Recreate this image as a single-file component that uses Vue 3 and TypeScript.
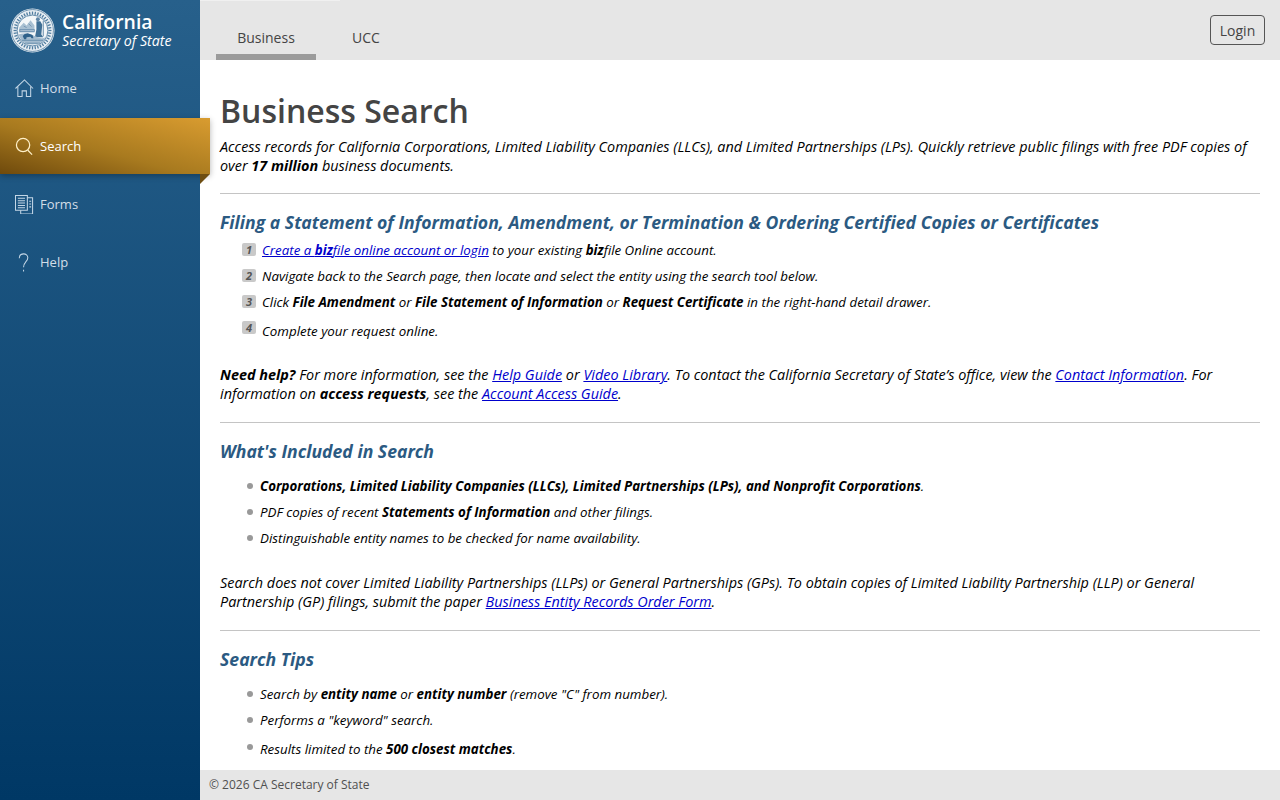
<script setup lang="ts">
const rays = Array.from({ length: 40 }, (_, i) => i * 9)
</script>

<template>
  <div class="app">
    <aside class="side">
      <div class="brand">
        <svg class="seal" viewBox="0 0 46 46" aria-hidden="true">
          <circle cx="23" cy="23" r="22.5" fill="#e8eef3" />
          <circle cx="23" cy="23" r="21.4" fill="none" stroke="#4f7c9f" stroke-width="0.8" />
          <g stroke="#4f7c9f" stroke-width="1.3">
            <line v-for="r in rays" :key="r" x1="23" y1="3.6" x2="23" y2="6.8" :transform="`rotate(${r} 23 23)`" />
          </g>
          <circle cx="23" cy="23" r="15.8" fill="#f4f7f9" stroke="#4f7c9f" stroke-width="0.9" />
          <path d="M9.5 20 L14 15 L17 18 L21 12.5 L25 18 V25 H9Z" fill="#a9c0d2" />
          <path d="M10 22 H25 V24 H10Z M14 18.5 L17 20 M19 16 L22 19" stroke="#5f86a7" stroke-width="0.7" fill="none" />
          <circle cx="28.5" cy="11.5" r="2" fill="#5f86a7" />
          <path d="M27 13.5 L31 13.5 L33 17 L32 27 L34 30 L25.5 30 L27 22Z" fill="#3f6f95" />
          <path d="M34 13 V29" stroke="#3f6f95" stroke-width="0.8" />
          <path d="M8.5 27 Q18 24.5 26 29 T37.5 28 L33.5 34.5 Q23 40 12.5 34.5Z" fill="#a5bccf" />
          <path d="M13 28.5 Q15 25.5 19 26 L23 27.5 L24 31 H22 L21 29.5 L17 30 L16.5 32 H14.5Z" fill="#2f618a" />
          <path d="M12 33 H34 M15 36 H31" stroke="#4f7c9f" stroke-width="0.7" />
        </svg>
        <div class="brand-text">
          <div class="brand-top">California</div>
          <div class="brand-sub">Secretary of State</div>
        </div>
      </div>
      <nav class="nav">
        <a class="item"><svg class="ico" viewBox="0 0 20 20" fill="none" stroke-width="1.1"><path d="M0.5 10 L10 1 L19 10" /><path d="M3 8 V18.5 H7.5 V12.5 H12 V18.5 H16.5 V8" /></svg><span>Home</span></a>
        <a class="item active"><svg class="ico" viewBox="0 0 20 20" fill="none" stroke-width="1.3"><circle cx="8.5" cy="8.5" r="7" /><path d="M13.5 14 L18 18.5" /></svg><span>Search</span></a>
        <a class="item"><svg class="ico" viewBox="0 0 20 20" fill="none" stroke-width="1.1"><path d="M0.5 0.5 H13 V16 H0.5Z" /><path d="M3 3.5 H10.5 M3 6 H10.5 M3 8.5 H10.5 M3 11 H10.5 M3 13.5 H10.5" /><path d="M13 3 H18.5 V20 H6 V16" /><path d="M15 6.5 H17 M15 9.5 H17 M15 12.5 H17" /></svg><span>Forms</span></a>
        <a class="item"><svg class="ico" viewBox="0 0 20 20" fill="none" stroke-width="1.1"><path d="M4.5 5.5 C4.5 -0.5 13.5 -0.5 13.5 5 C13.5 9 9 9.5 9 15" /><path d="M9 17.5 V19.5" /></svg><span>Help</span></a>
      </nav>
    </aside>

    <div class="right">
      <header class="top">
        <div class="tabs">
          <div class="tab on">Business</div>
          <div class="tab">UCC</div>
        </div>
        <button class="login">Login</button>
      </header>

      <main class="main">
        <h1>Business Search</h1>
        <p class="para lead">Access records for California Corporations, Limited Liability Companies (LLCs), and Limited Partnerships (LPs). Quickly retrieve public filings with free PDF copies of over <b>17 million</b> business documents.</p>
        <hr />
        <h2>Filing a Statement of Information, Amendment, or Termination &amp; Ordering Certified Copies or Certificates</h2>
        <ol class="steps">
          <li><span class="num">1</span><span><a href="#">Create a <b>biz</b>file online account or login</a> to your existing <b>biz</b>file Online account.</span></li>
          <li><span class="num">2</span><span>Navigate back to the Search page, then locate and select the entity using the search tool below.</span></li>
          <li><span class="num">3</span><span>Click <b>File Amendment</b> or <b>File Statement of Information</b> or <b>Request Certificate</b> in the right-hand detail drawer.</span></li>
          <li class="late"><span class="num">4</span><span>Complete your request online.</span></li>
        </ol>
        <p class="para help"><b>Need help?</b> For more information, see the <a href="#">Help Guide</a> or <a href="#">Video Library</a>. To contact the California Secretary of State’s office, view the <a href="#">Contact Information</a>. For information on <b>access requests</b>, see the <a href="#">Account Access Guide</a>.</p>
        <hr class="wide" />
        <h2>What's Included in Search</h2>
        <ul class="dots">
          <li><span><b>Corporations, Limited Liability Companies (LLCs), Limited Partnerships (LPs), and Nonprofit Corporations</b>.</span></li>
          <li><span>PDF copies of recent <b>Statements of Information</b> and other filings.</span></li>
          <li><span>Distinguishable entity names to be checked for name availability.</span></li>
        </ul>
        <p class="para help after-dots">Search does not cover Limited Liability Partnerships (LLPs) or General Partnerships (GPs). To obtain copies of Limited Liability Partnership (LLP) or General Partnership (GP) filings, submit the paper <a href="#">Business Entity Records Order Form</a>.</p>
        <hr class="wide" />
        <h2>Search Tips</h2>
        <ul class="dots">
          <li><span>Search by <b>entity name</b> or <b>entity number</b> (remove "C" from number).</span></li>
          <li><span>Performs a "keyword" search.</span></li>
          <li class="late"><span>Results limited to the <b>500 closest matches</b>.</span></li>
        </ul>
      </main>

      <footer class="foot">© 2026 CA Secretary of State</footer>
    </div>
  </div>
</template>

<style>
html, body { margin: 0; height: 100%; overflow: hidden; }
</style>

<style scoped>
.app { display: flex; height: 800px; font-family: "Open Sans", "Liberation Sans", sans-serif; color: #000; }
.side { width: 200px; flex: none; background: linear-gradient(180deg, #27608b 0%, #003865 100%); color: #fff; position: relative; z-index: 2; }
.brand { height: 60px; display: flex; align-items: center; padding: 1px 0 0 10px; gap: 7px; box-sizing: border-box; }
.seal { width: 45px; height: 45px; flex: none; }
.brand-text { margin-top: -2px; }
.brand-top { font-size: 19.4px; font-weight: 600; line-height: 23px; }
.brand-sub { font-size: 14.2px; font-style: italic; line-height: 16px; }
.nav { display: flex; flex-direction: column; gap: 2px; }
.item { height: 56px; box-sizing: border-box; display: flex; align-items: center; padding-left: 15px; gap: 6px; font-size: 13px; color: #d3dee8; position: relative; }
.ico { width: 19px; height: 19px; flex: none; stroke: #c3d6e6; }
.active { width: 210px; color: #fff; background: linear-gradient(to top right, #6f4a0c 0%, #a87a1f 45%, #d99c30 100%); box-shadow: 0 2px 6px rgba(0, 0, 0, .3); }
.active .ico { stroke: #fff0c8; }
.active::after { content: ""; position: absolute; right: 0; bottom: -10px; width: 0; height: 0; border-top: 10px solid #6e4e12; border-right: 10px solid transparent; }
.right { flex: 1; min-width: 0; display: flex; flex-direction: column; }
.top { height: 60px; flex: none; background: #e6e6e6; display: flex; justify-content: space-between; padding: 0 15px 0 16px; box-sizing: border-box; position: relative; }
.top::before { content: ""; position: absolute; left: 0; top: 0; width: 140px; height: 1px; background: #f0f0f0; }
.tabs { display: flex; }
.tab { width: 100px; height: 60px; box-sizing: border-box; padding-top: 29px; text-align: center; font-size: 14px; line-height: 18px; color: #444; }
.tab.on { border-bottom: 6px solid #9b9b9b; }
.login { align-self: flex-start; margin-top: 15px; width: 55px; height: 30px; padding: 0; background: transparent; border: 1px solid #555; border-radius: 4px; font: 14px "Open Sans", sans-serif; color: #444; }
.main { flex: 1; min-height: 0; overflow: hidden; padding: 31px 20px 0; }
h1 { margin: 0; font-size: 32px; line-height: 40px; font-weight: 600; color: #444; }
.para { margin: 0; font-size: 14.41px; line-height: 19px; font-style: italic; }
.lead { margin-top: 6px; }
.help { margin-top: 21px; }
.after-dots { margin-top: 22px; }
hr { border: 0; border-top: 1px solid #c4c4c4; margin: 18px 0 0; }
hr.wide { margin-top: 19px; }
h2 { margin: 16px 0 0; font-size: 17.62px; line-height: 24px; font-weight: 700; font-style: italic; color: #2b5a82; }
.steps, .dots { list-style: none; margin: 0; padding: 0; font-size: 13.33px; font-style: italic; }
.steps { margin-top: 3px; }
.steps li { display: flex; height: 26px; align-items: center; padding-left: 22px; gap: 6px; }
.steps li.late { margin-top: 3px; }
.num { width: 14px; height: 13px; background: #c9c9c9; color: #555; font-size: 11px; font-weight: 700; line-height: 13px; text-align: center; border-radius: 2px; flex: none; margin-top: -2px; }
.late .num { margin-top: -8px; }
.dots { margin-top: 10px; }
.dots li { display: flex; height: 26px; align-items: center; padding-left: 27px; gap: 7px; }
.dots li::before { content: ""; width: 6px; height: 6px; border-radius: 50%; background: #999; flex: none; }
.dots li.late { margin-top: 3px; }
.dots li.late::before { margin-top: -5px; }
a { color: #0000cc; }
b { font-weight: 700; }
.foot { height: 30px; flex: none; background: #e6e6e6; font-size: 12px; line-height: 30px; padding-left: 9px; color: #505050; }
</style>
